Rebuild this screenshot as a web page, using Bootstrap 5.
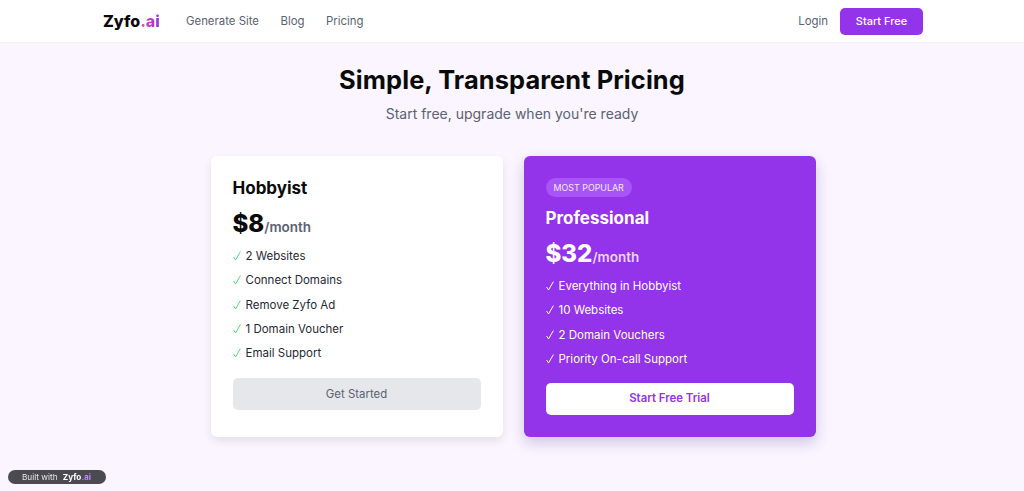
<!DOCTYPE html>
<html lang="en">
<head>
  <meta charset="UTF-8">
  <meta name="viewport" content="width=device-width, initial-scale=1.0">
  <title>Zyfo.ai Pricing</title>
  <link href="https://cdn.jsdelivr.net/npm/bootstrap@5.3.0/dist/css/bootstrap.min.css" rel="stylesheet">
  <script src="https://cdn.jsdelivr.net/npm/bootstrap@5.3.0/dist/js/bootstrap.bundle.min.js"></script>
  <style>
    body { background: #faf5ff; font-family: Inter, "Liberation Sans", sans-serif; height: 491px; overflow: hidden; }
    .top-bar { height: 43px; background: #fff; border-bottom: 1px solid #f3eef8; padding: 0 101px 0 103px; }
    .logo-text { font-size: 16px; font-weight: 800; color: #0a0a0a; width: 83px; }
    .logo-text span { background: linear-gradient(90deg, #ec4899, #9333ea); -webkit-background-clip: text; background-clip: text; color: transparent; }
    .menu-link { font-size: 11.4px; color: #5b6270; text-decoration: none; padding-top: 1px; }
    .menu-row { gap: 21.5px; }
    .start-btn { background: #9333ea; color: #fff; font-size: 11px; font-weight: 500; width: 83px; height: 27px; border-radius: 5px; padding: 0; border: 0; }
    .head-title { font-size: 25.4px; font-weight: 700; color: #0a0a0a; margin: 22px 0 0; line-height: 30px; letter-spacing: .1px; }
    .head-sub { font-size: 14px; color: #5b6270; margin: 8px 0 0; line-height: 22px; }
    .plans-row { gap: 21px; margin-top: 31px; padding-left: 2px; }
    .plan-box { width: 292px; height: 281px; background: #fff; border-radius: 6px; padding: 20px 22px; box-shadow: 0 4px 10px rgba(0,0,0,.09); }
    .plan-pop { background: #9333ea; color: #fff; padding-top: 17px; box-shadow: 0 6px 14px rgba(70,30,130,.22); }
    .pop-tag { display: inline-block; background: #a855f7; color: #f3e8ff; font-size: 8.9px; line-height: 19px; height: 19px; padding: 0 8px; border-radius: 10px; margin-bottom: 9px; }
    .plan-name { font-size: 17px; font-weight: 700; line-height: 24px; margin: 0 0 6px; color: #0a0a0a; }
    .plan-pop .plan-name { color: #fff; }
    .plan-cost { font-size: 24px; font-weight: 800; line-height: 36px; margin-bottom: 2px; color: #0a0a0a; }
    .plan-pop .plan-cost { color: #fff; }
    .plan-cost small { font-size: 13.5px; font-weight: 600; color: #5b6270; }
    .plan-pop .plan-cost small { color: #e9d5ff; }
    .feat-list { list-style: none; padding: 0; margin: 0 0 16px; }
    .plan-pop .feat-list { margin-bottom: 15px; }
    .feat-list li { font-size: 11.5px; line-height: 18px; margin-bottom: 6.3px; color: #1f2937; display: flex; align-items: center; gap: 5px; }
    .plan-pop .feat-list li { color: #fff; }
    .tick { width: 8px; height: 10px; flex: none; fill: none; stroke: #4ade80; stroke-width: 1; }
    .plan-pop .tick { stroke: #fff; }
    .plan-btn { display: block; width: 100%; height: 32px; border: 0; border-radius: 5px; padding: 0; font-size: 11.4px; }
    .btn-grey { background: #e5e7eb; color: #5b6270; }
    .btn-white { background: #fff; color: #9333ea; font-weight: 600; }
    .built-tag { position: fixed; left: 8px; bottom: 7px; width: 98px; height: 14px; border-radius: 7px; background: #4a4a50; color: #e8e8e8; font-size: 8.2px; line-height: 14px; padding-left: 14px; }
    .built-tag b { color: #fff; margin-left: 3px; }
    .built-tag b span { color: #c084fc; }
  </style>
</head>
<body>
  <nav class="top-bar d-flex align-items-center justify-content-between">
    <div class="d-flex align-items-center">
      <div class="logo-text">Zyfo<span>.ai</span></div>
      <div class="d-flex menu-row">
        <a class="menu-link" href="#">Generate Site</a>
        <a class="menu-link" href="#">Blog</a>
        <a class="menu-link" href="#">Pricing</a>
      </div>
    </div>
    <div class="d-flex align-items-center gap-2">
      <a class="menu-link" href="#">Login</a>
      <button class="btn start-btn ms-1">Start Free</button>
    </div>
  </nav>

  <div class="text-center">
    <h1 class="head-title">Simple, Transparent Pricing</h1>
    <p class="head-sub">Start free, upgrade when you're ready</p>
  </div>

  <div class="d-flex justify-content-center plans-row">
    <div class="plan-box">
      <h2 class="plan-name">Hobbyist</h2>
      <div class="plan-cost">$8<small>/month</small></div>
      <ul class="feat-list">
        <li><svg class="tick" viewBox="0 0 8 10"><path d="M.6 6 L2.5 9 L7.4 .6"/></svg>2 Websites</li>
        <li><svg class="tick" viewBox="0 0 8 10"><path d="M.6 6 L2.5 9 L7.4 .6"/></svg>Connect Domains</li>
        <li><svg class="tick" viewBox="0 0 8 10"><path d="M.6 6 L2.5 9 L7.4 .6"/></svg>Remove Zyfo Ad</li>
        <li><svg class="tick" viewBox="0 0 8 10"><path d="M.6 6 L2.5 9 L7.4 .6"/></svg>1 Domain Voucher</li>
        <li><svg class="tick" viewBox="0 0 8 10"><path d="M.6 6 L2.5 9 L7.4 .6"/></svg>Email Support</li>
      </ul>
      <button class="btn plan-btn btn-grey">Get Started</button>
    </div>
    <div class="plan-box plan-pop">
      <span class="pop-tag">MOST POPULAR</span>
      <h2 class="plan-name">Professional</h2>
      <div class="plan-cost">$32<small>/month</small></div>
      <ul class="feat-list">
        <li><svg class="tick" viewBox="0 0 8 10"><path d="M.6 6 L2.5 9 L7.4 .6"/></svg>Everything in Hobbyist</li>
        <li><svg class="tick" viewBox="0 0 8 10"><path d="M.6 6 L2.5 9 L7.4 .6"/></svg>10 Websites</li>
        <li><svg class="tick" viewBox="0 0 8 10"><path d="M.6 6 L2.5 9 L7.4 .6"/></svg>2 Domain Vouchers</li>
        <li><svg class="tick" viewBox="0 0 8 10"><path d="M.6 6 L2.5 9 L7.4 .6"/></svg>Priority On-call Support</li>
      </ul>
      <button class="btn plan-btn btn-white">Start Free Trial</button>
    </div>
  </div>

  <div class="built-tag">Built with <b>Zyfo<span>.ai</span></b></div>
</body>
</html>
